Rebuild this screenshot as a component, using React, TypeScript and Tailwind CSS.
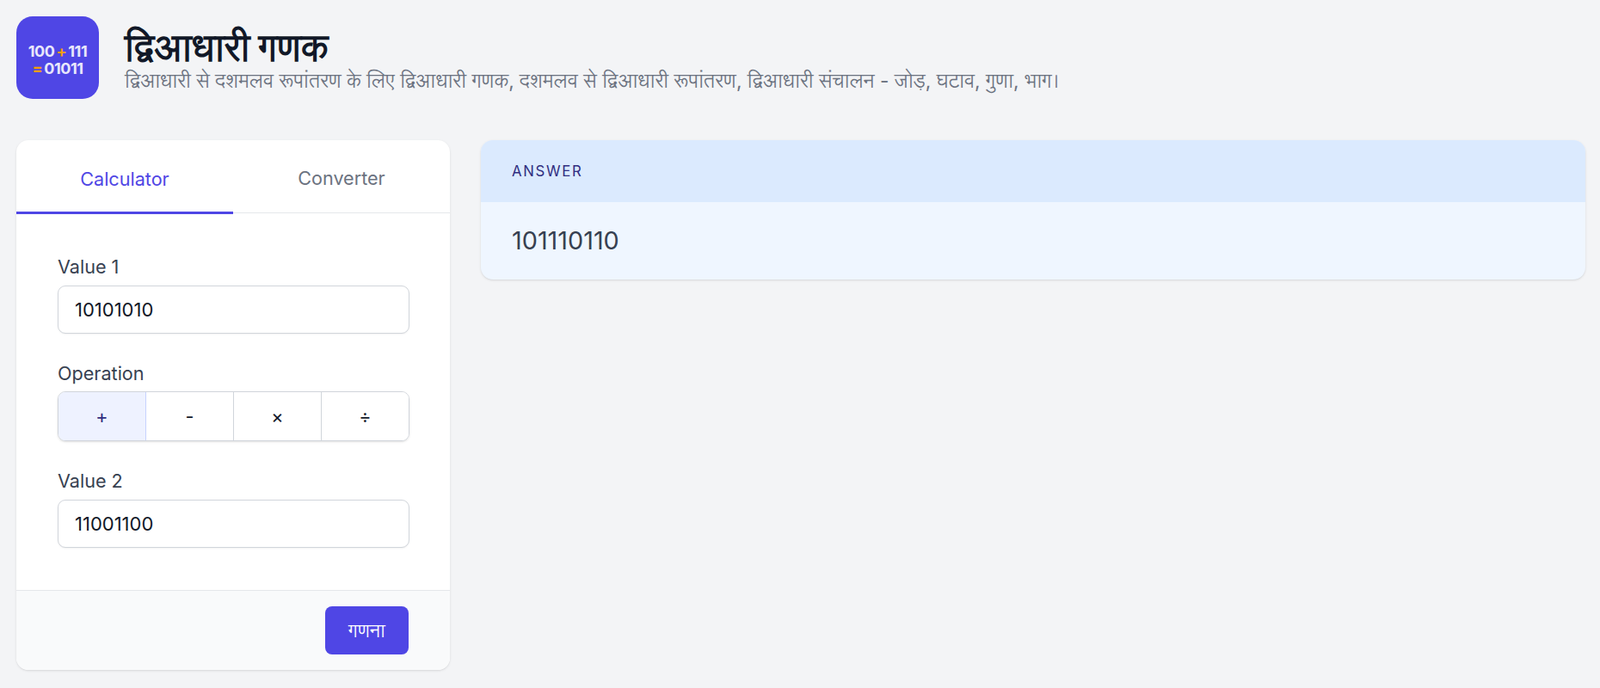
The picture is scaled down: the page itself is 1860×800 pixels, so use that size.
import React from 'react';

const Field = ({ label, value }: { label: string; value: string }) => (
  <div>
    <label className="block h-[32px] text-[21.6px] leading-[32px] text-[#374151]">{label}</label>
    <input
      readOnly
      value={value}
      className="mt-[6px] block h-[56px] w-full rounded-[9px] border border-[#d1d5db] bg-white px-[19px] text-[22px] text-[#111827] shadow-xs outline-none"
    />
  </div>
);

const ops = ['+', '-', '×', '÷'];

export default function App() {
  return (
    <div className="min-h-[800px] bg-[#f3f4f6] pl-[19px] pr-[17px] pt-[19px] font-['Inter','Lohit_Devanagari',sans-serif]">
      {/* Header */}
      <div className="flex items-center">
        <div className="flex h-[96px] w-[96px] shrink-0 flex-col items-center justify-center rounded-[19px] bg-[#4f46e5] pt-[5px] text-[18px] font-bold leading-[20px] tracking-tight text-[#e8e7fb]">
          <div>
            100<span className="mx-[2px] text-[#f59e0b]">+</span>111
          </div>
          <div>
            <span className="mr-[2px] text-[#f59e0b]">=</span>01011
          </div>
        </div>
        <div className="ml-[30px] pt-[6px]">
          <h1 className="text-[42.8px] font-bold leading-[48px] text-[#111827]">द्विआधारी गणक</h1>
          <p className="text-[22.64px] leading-[28px] text-[#6b7280]">
            द्विआधारी से दशमलव रूपांतरण के लिए द्विआधारी गणक, दशमलव से द्विआधारी रूपांतरण, द्विआधारी संचालन - जोड़, घटाव, गुणा, भाग।
          </p>
        </div>
      </div>

      <div className="mt-[48px] flex items-start gap-[36px]">
        {/* Left card */}
        <div className="w-[504px] shrink-0 overflow-hidden rounded-[14px] bg-white shadow">
          <div className="flex h-[85px] border-b border-[#e5e7eb]">
            <div className="flex h-[86px] w-1/2 items-center justify-center border-b-[3px] border-[#4f46e5] pt-[7px] text-[21.6px] text-[#4f46e5]">
              Calculator
            </div>
            <div className="flex w-1/2 items-center justify-center pt-[4px] text-[21.6px] text-[#6b7280]">
              Converter
            </div>
          </div>
          <div className="flex flex-col gap-[30px] pb-[49px] pl-[48px] pr-[47px] pt-[46px]">
            <Field label="Value 1" value="10101010" />
            <div>
              <div className="h-[32px] text-[21.6px] leading-[32px] text-[#374151]">Operation</div>
              <div className="mt-[5px] flex h-[58px] overflow-hidden rounded-[9px] border border-[#d1d5db] shadow">
                {ops.map((op, i) => (
                  <div
                    key={op}
                    className={
                      i === 0
                        ? 'flex flex-1 items-center justify-center border-r border-[#c7d2fe] bg-[#eef2ff] text-[21.6px] text-[#312e81]'
                        : 'flex flex-1 items-center justify-center border-r border-[#d1d5db] bg-white text-[21.6px] text-[#111827] last:border-r-0'
                    }
                  >
                    {op}
                  </div>
                ))}
              </div>
            </div>
            <Field label="Value 2" value="11001100" />
          </div>
          <div className="flex justify-end border-t border-[#e5e7eb] bg-[#f9fafb] px-[48px] py-[18px]">
            <button className="h-[56px] w-[97px] rounded-[8px] bg-[#4f46e5] text-[21.6px] font-medium text-white">गणना</button>
          </div>
        </div>

        {/* Answer */}
        <div className="flex-1 overflow-hidden rounded-[14px] bg-[#eff6ff] shadow">
          <div className="flex h-[72px] items-center bg-[#dbeafe] px-[36px] pt-[1px] text-[16.8px] uppercase tracking-[0.1em] text-[#312e81]">
            Answer
          </div>
          <div className="flex h-[90px] items-center px-[36px] text-[28.8px] text-[#374151]">101110110</div>
        </div>
      </div>
    </div>
  );
}
